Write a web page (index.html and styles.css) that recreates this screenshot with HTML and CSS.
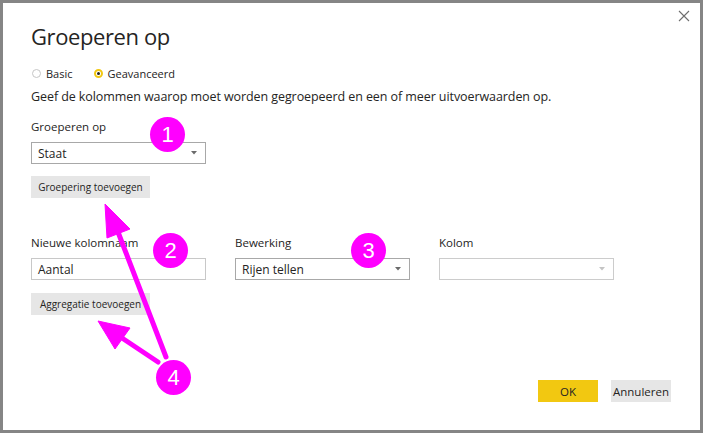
FILE: index.html
```html
<!DOCTYPE html>
<html lang="nl">
<head>
<meta charset="utf-8">
<title>Groeperen op</title>
<link rel="stylesheet" href="styles.css">
</head>
<body>
<div class="dialog">
  <button class="close" aria-label="Sluiten">
    <svg width="12" height="12" viewBox="0 0 12 12"><path d="M1 1 L11 11 M11 1 L1 11" stroke="#6e6e6e" stroke-width="1.1" fill="none"/></svg>
  </button>
  <h1 class="title">Groeperen op</h1>
  <div class="radios">
    <label class="radio"><span class="dot"></span>Basic</label>
    <label class="radio checked"><span class="dot"></span>Geavanceerd</label>
  </div>
  <p class="desc">Geef de kolommen waarop moet worden gegroepeerd en een of meer uitvoerwaarden op.</p>
  <div class="label first">Groeperen op</div>
  <div class="select">
    <span class="value">Staat</span>
    <svg class="caret" width="6" height="4" viewBox="0 0 6 4"><path d="M0 0 H6 L3 3.5 Z" fill="#6b6b6b"/></svg>
  </div>
  <button class="btn-grey add-group">Groepering toevoegen</button>
  <div class="agg-row">
    <div class="field">
      <div class="label">Nieuwe kolomnaam</div>
      <div class="input"><span class="value">Aantal</span></div>
    </div>
    <div class="field">
      <div class="label">Bewerking</div>
      <div class="select">
        <span class="value">Rijen tellen</span>
        <svg class="caret" width="6" height="4" viewBox="0 0 6 4"><path d="M0 0 H6 L3 3.5 Z" fill="#6b6b6b"/></svg>
      </div>
    </div>
    <div class="field">
      <div class="label">Kolom</div>
      <div class="select disabled">
        <span class="value"></span>
        <svg class="caret" width="6" height="4" viewBox="0 0 6 4"><path d="M0 0 H6 L3 3.5 Z" fill="#c4c4c4"/></svg>
      </div>
    </div>
  </div>
  <button class="btn-grey add-agg">Aggregatie toevoegen</button>
  <div class="footer">
    <button class="btn-ok">OK</button>
    <button class="btn-cancel">Annuleren</button>
  </div>

  <svg class="arrows" width="703" height="433" viewBox="0 0 703 433">
    <g fill="#ff00ff" stroke="#ff00ff">
      <line x1="118" y1="232" x2="166" y2="357" stroke-width="5" stroke-linecap="round"/>
      <polygon points="105,204 130,229 107,238" stroke-width="1" stroke-linejoin="round"/>
      <line x1="122" y1="338" x2="158" y2="362" stroke-width="5" stroke-linecap="round"/>
      <polygon points="98,321 130,328 115,349" stroke-width="1" stroke-linejoin="round"/>
    </g>
  </svg>
  <span class="badge b1">1</span>
  <span class="badge b2">2</span>
  <span class="badge b3">3</span>
  <span class="badge b4">4</span>
</div>
</body>
</html>
```

FILE: styles.css
```css
* {
  box-sizing: border-box;
  margin: 0;
  padding: 0;
}

html, body {
  width: 703px;
  height: 433px;
  overflow: hidden;
  background: #ffffff;
}

body {
  font-family: "Open Sans", "Noto Sans", sans-serif;
  color: #252423;
}

.dialog {
  position: relative;
  width: 703px;
  height: 433px;
  border: 3px solid #858585;
  background: #ffffff;
  padding: 18px 29px 28px 28px;
  display: flex;
  flex-direction: column;
  align-items: flex-start;
}

.close {
  position: absolute;
  top: 6px;
  right: 9px;
  width: 14px;
  height: 14px;
  border: none;
  background: transparent;
  display: flex;
  align-items: center;
  justify-content: center;
}

.title {
  font-size: 22px;
  font-weight: 400;
  line-height: 30px;
  letter-spacing: -0.4px;
  color: #252423;
}

.radios {
  display: flex;
  align-items: center;
  gap: 20px;
  margin-top: 14px;
  height: 16px;
  font-size: 11px;
}

.radio {
  display: flex;
  align-items: center;
}

.dot {
  width: 9px;
  height: 9px;
  border: 1px solid #c6c6c6;
  border-radius: 50%;
  margin: 0 5px 0 1px;
  display: flex;
  align-items: center;
  justify-content: center;
}

.radio.checked .dot {
  border: 2px solid #f2c811;
}

.radio.checked .dot::after {
  content: "";
  width: 3px;
  height: 3px;
  border-radius: 50%;
  background: #252423;
}

.desc {
  margin-top: 7px;
  font-size: 12.5px;
  line-height: 18px;
  letter-spacing: -0.08px;
}

.label {
  font-size: 11.5px;
  line-height: 16px;
}

.label.first {
  margin-top: 13px;
}

.select, .input {
  margin-top: 7px;
  width: 175px;
  height: 22px;
  border: 1px solid #a8a8a8;
  display: flex;
  align-items: center;
  justify-content: space-between;
  padding: 0 8px 0 6px;
  font-size: 12px;
}

.input {
  border-color: #c8c8c8;
}

.select.disabled {
  border-color: #cccccc;
}

.btn-grey {
  width: 119px;
  height: 22px;
  border: none;
  background: #e6e6e6;
  font-family: inherit;
  font-size: 10px;
  color: #252423;
  text-align: center;
}

.add-group {
  margin-top: 12px;
}

.agg-row {
  display: flex;
  gap: 29px;
  margin-top: 37px;
}

.add-agg {
  margin-top: 13px;
}

.footer {
  margin-top: auto;
  align-self: stretch;
  display: flex;
  justify-content: flex-end;
  gap: 13px;
}

.btn-ok, .btn-cancel {
  width: 60px;
  height: 22px;
  border: none;
  font-family: inherit;
  font-size: 11.5px;
  color: #252423;
}

.btn-ok {
  background: #f2c811;
}

.btn-cancel {
  background: #e6e6e6;
}

.arrows {
  position: absolute;
  top: -3px;
  left: -3px;
  pointer-events: none;
}

.badge {
  position: absolute;
  width: 35px;
  height: 35px;
  border-radius: 50%;
  background: #ff00ff;
  color: #ffffff;
  font-family: "Liberation Sans", Arial, sans-serif;
  font-size: 22px;
  line-height: 35px;
  text-align: center;
}

.b1 { left: 147px; top: 114px; }
.b2 { left: 150px; top: 230px; }
.b3 { left: 348px; top: 230px; }
.b4 { left: 153px; top: 357px; }
```
